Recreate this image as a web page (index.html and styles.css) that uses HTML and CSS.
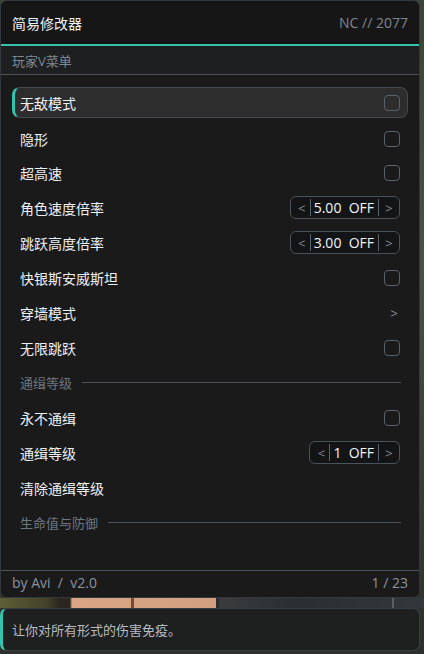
FILE: index.html
```html
<!DOCTYPE html>
<html lang="zh">
<head>
<meta charset="utf-8">
<link rel="stylesheet" href="styles.css">
</head>
<body>
<div class="scene">
  <div class="menu">
    <div class="header">
      <span class="title">简易修改器</span>
      <span class="brand">NC // 2077</span>
    </div>
    <div class="sub">玩家V菜单</div>
    <div class="list">
      <div class="row active"><span>无敌模式</span><i class="cb"></i></div>
      <div class="row"><span>隐形</span><i class="cb"></i></div>
      <div class="row"><span>超高速</span><i class="cb"></i></div>
      <div class="row"><span>角色速度倍率</span>
        <div class="step"><span class="ar">&lt;</span><span class="val">5.00&nbsp;&nbsp;OFF</span><span class="ar">&gt;</span></div></div>
      <div class="row"><span>跳跃高度倍率</span>
        <div class="step"><span class="ar">&lt;</span><span class="val">3.00&nbsp;&nbsp;OFF</span><span class="ar">&gt;</span></div></div>
      <div class="row"><span>快银斯安威斯坦</span><i class="cb"></i></div>
      <div class="row"><span>穿墙模式</span><span class="go">&gt;</span></div>
      <div class="row"><span>无限跳跃</span><i class="cb"></i></div>
      <div class="row section"><span>通缉等级</span><b class="rule"></b></div>
      <div class="row"><span>永不通缉</span><i class="cb"></i></div>
      <div class="row"><span>通缉等级</span>
        <div class="step"><span class="ar">&lt;</span><span class="val">1&nbsp;&nbsp;OFF</span><span class="ar">&gt;</span></div></div>
      <div class="row"><span>清除通缉等级</span></div>
      <div class="row section"><span>生命值与防御</span><b class="rule"></b></div>
    </div>
    <div class="footer">
      <span>by Avi&nbsp;&nbsp;/&nbsp;&nbsp;v2.0</span>
      <span>1 / 23</span>
    </div>
  </div>
  <div class="gap">
    <i class="g1"></i><i class="g2"></i><i class="g3"></i><i class="g4"></i>
  </div>
  <div class="tip">让你对所有形式的伤害免疫。</div>
</div>
</body>
</html>
```

FILE: styles.css
```css
* { box-sizing: border-box; margin: 0; padding: 0; }
html, body { width: 424px; height: 654px; overflow: hidden; }
body {
  font-family: "Open Sans", "Noto Sans CJK SC", sans-serif;
  background: linear-gradient(180deg, #3c4438 0%, #4a5246 40%, #3a3f38 70%, #2c302c 100%);
  color: #e8eaec;
}
.scene { display: flex; flex-direction: column; width: 424px; height: 654px; }
.menu {
  width: 420px;
  height: 598px;
  background: #1a1a1b;
  border: 1px solid #33383e;
  border-radius: 7px;
  display: flex;
  flex-direction: column;
  overflow: hidden;
}
.header {
  height: 45px;
  display: flex;
  align-items: center;
  justify-content: space-between;
  padding: 0 11px 0 11px;
  background: #161617;
  border-bottom: 2px solid #36c2ae;
}
.title { font-size: 14px; color: #f0f2f4; }
.brand { font-size: 14px; color: #7d858f; }
.sub {
  height: 29px;
  display: flex;
  align-items: center;
  padding-left: 11px;
  font-size: 13px;
  color: #7f8893;
  background: #1e1f21;
  border-bottom: 1px solid #4a535d;
}
.list { padding: 12px 11px 0 11px; flex: 1; display: flex; flex-direction: column; }
.row {
  height: 35px;
  display: flex;
  align-items: center;
  justify-content: space-between;
  padding: 0 7px 0 7px;
  font-size: 14px;
  color: #eef0f2;
  border: 1px solid transparent;
  border-radius: 8px;
}
.row.active {
  height: 31px;
  margin: 0 0 2px 0;
  background: #2d2d2e;
  border: 1px solid #46494d;
  border-left: 3px solid #33c4ad;
  padding-left: 5px;
}
.row.active + .row { margin-top: 2px; height: 33px; }
.cb {
  width: 16px;
  height: 16px;
  border: 1.5px solid #59616b;
  border-radius: 4px;
}
.go { color: #8a929c; font-size: 13px; margin-right: 2px; }
.step {
  display: flex;
  align-items: center;
  height: 23px;
  border: 1px solid #4a525c;
  border-radius: 6px;
  background: #131416;
  font-size: 14px;
}
.step .ar {
  color: #858d97;
  font-size: 13px;
  width: 15px;
  text-align: center;
}
.step .val {
  color: #f2f4f6;
  padding: 0 4px 0 3px;
  border-left: 1px solid #5a626c;
  border-right: 1px solid #5a626c;
  line-height: 17px;
}
.step .ar:first-child { width: 19px; padding-left: 3px; }
.step .ar:last-child { width: 20px; }
.section { color: #6d7680; font-size: 13px; justify-content: flex-start; }
.rule { flex: 1; height: 1px; background: #4a525c; margin-left: 10px; margin-right: -1px; }
.footer {
  height: 27px;
  display: flex;
  align-items: center;
  justify-content: space-between;
  padding: 0 11px 3px 11px;
  border-top: 1px solid #4a535d;
  font-size: 14px;
  color: #8a929b;
  background: #1a1a1b;
}
.gap {
  height: 10px;
  position: relative;
  background: linear-gradient(90deg, #5e5e36 0%, #44422a 11%, #2a2620 14%, #2a2620 16.5%, #d9a584 17%, #d2a080 51%, #3a3c3e 51.5%, #2a2e30 70%, #33383a 100%);
}
.gap i { position: absolute; top: 0; bottom: 0; width: 2px; background: #7a4a36; }
.gap .g1 { left: 131px; }
.gap .g2 { left: 133px; width: 1px; }
.gap .g3 { left: 216px; background: #2c2c2c; width: 3px; }
.gap .g4 { left: 392px; background: #5a5e60; }
.tip {
  width: 420px;
  height: 43px;
  display: flex;
  align-items: center;
  padding-left: 9px;
  font-size: 13px;
  color: #b6bcc4;
  background: rgba(30, 30, 31, 0.96);
  border: 1px solid #3a3f45;
  border-left: 3px solid #33c4ad;
  border-radius: 7px;
}
```
